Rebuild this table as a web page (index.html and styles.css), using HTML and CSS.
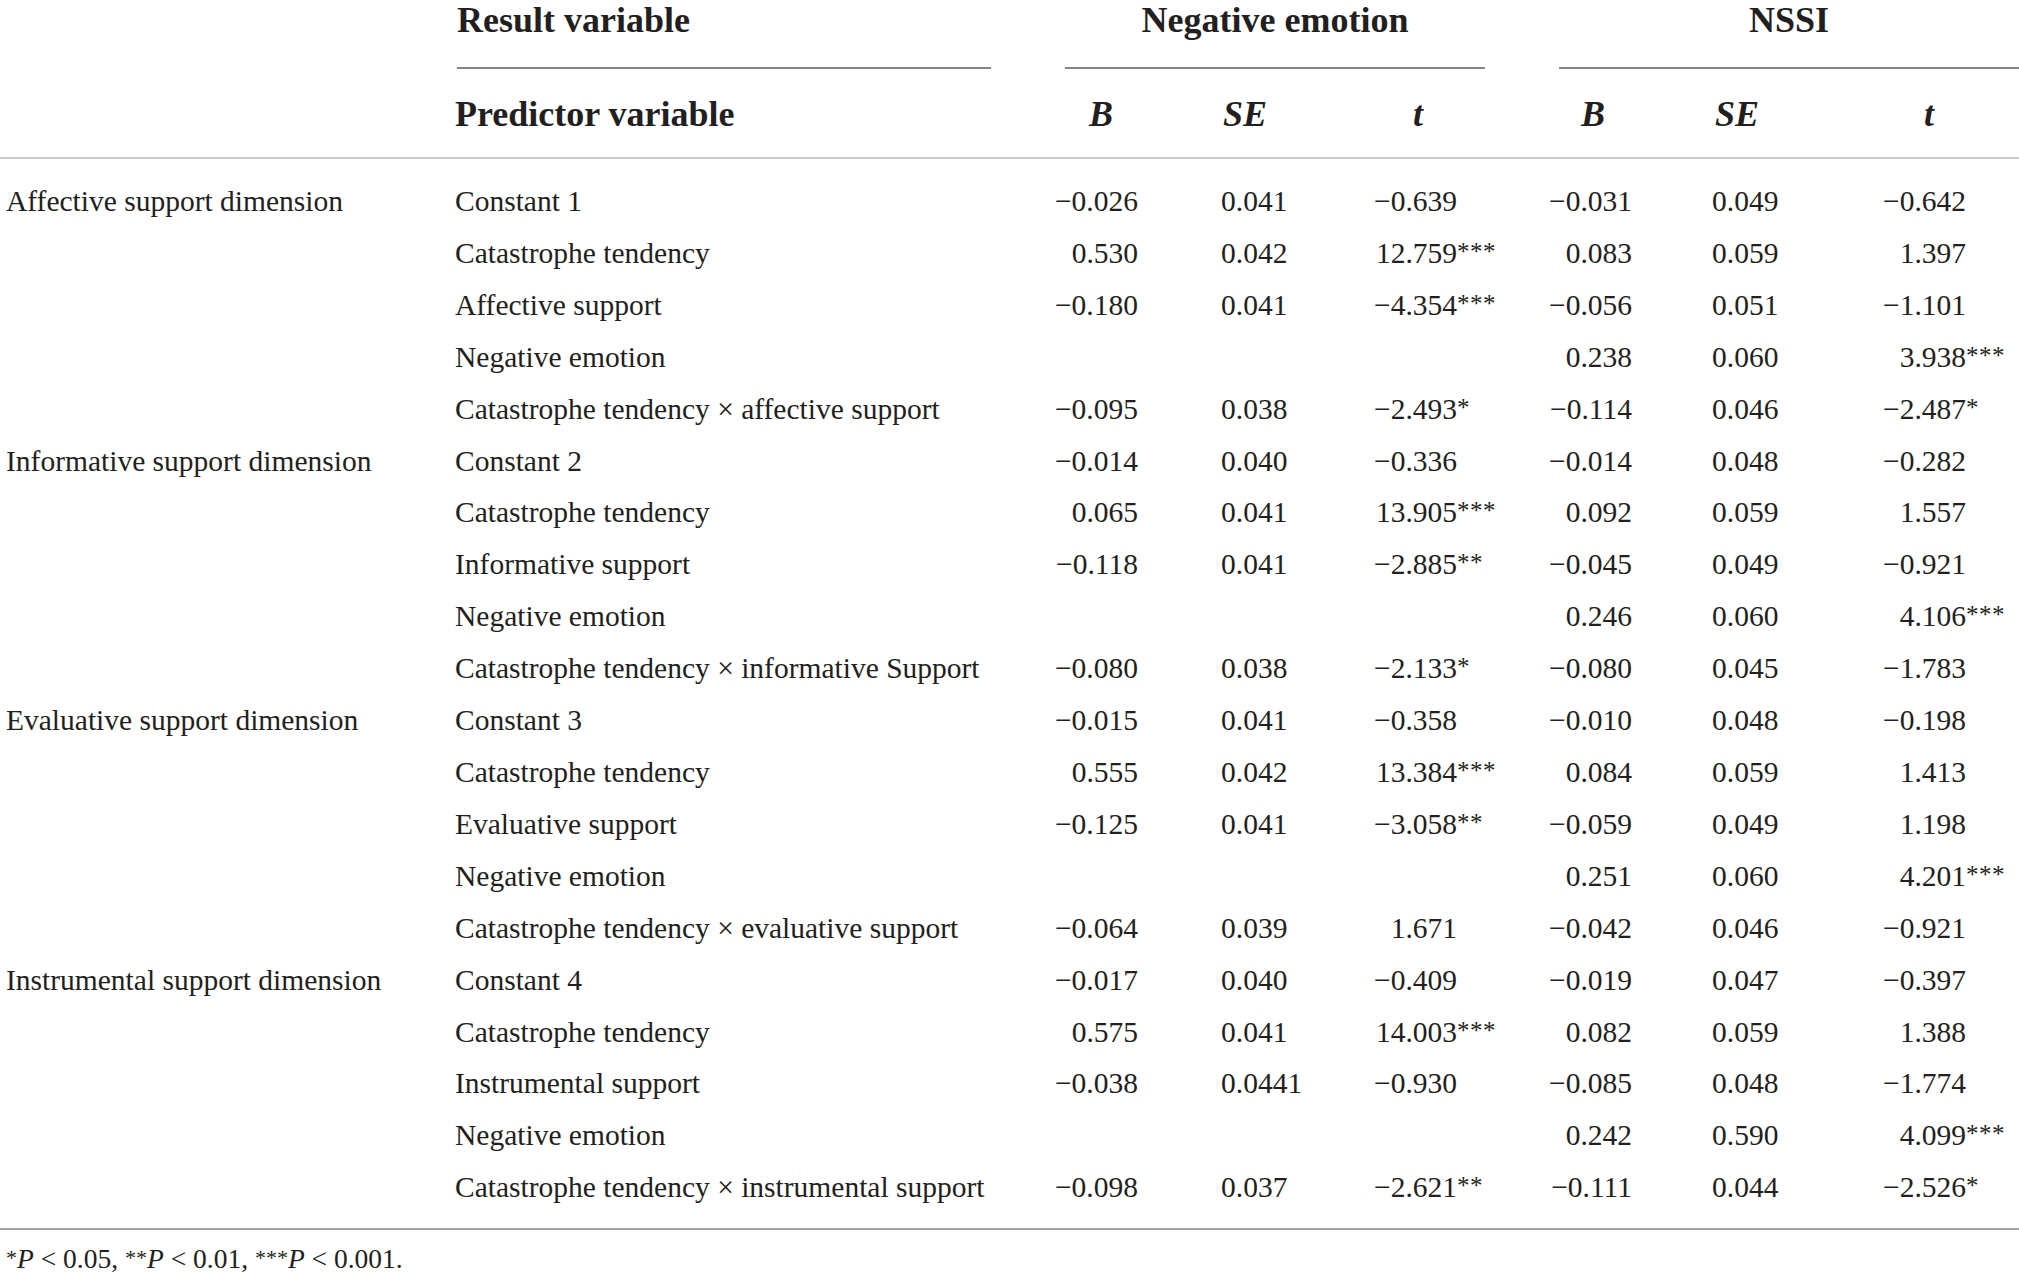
FILE: index.html
```html
<!DOCTYPE html>
<html lang="en">
<head>
<meta charset="utf-8">
<title>Moderated mediation table</title>
<link rel="stylesheet" href="styles.css">
</head>
<body>
<table class="res">
  <colgroup>
    <col class="w1"><col class="w2"><col class="w3"><col class="w4"><col class="w5"><col class="w6"><col class="w7"><col class="w8">
  </colgroup>
  <thead>
    <tr class="group">
      <th></th>
      <th><div class="gl gl-res">Result variable</div></th>
      <th colspan="3"><div class="gl gl-ne">Negative emotion</div></th>
      <th colspan="3"><div class="gl gl-nssi">NSSI</div></th>
    </tr>
    <tr class="sub">
      <th></th>
      <th class="pv">Predictor variable</th>
      <th class="h3"><i>B</i></th>
      <th class="h4"><i>SE</i></th>
      <th class="h5"><i>t</i></th>
      <th class="h6"><i>B</i></th>
      <th class="h7"><i>SE</i></th>
      <th class="h8"><i>t</i></th>
    </tr>
  </thead>
  <tbody>
    <tr><td class="c1">Affective support dimension</td><td class="c2">Constant 1</td><td class="c3">−0.026</td><td class="c4">0.041</td><td class="c5">−0.639</td><td class="c6">−0.031</td><td class="c7">0.049</td><td class="c8">−0.642</td></tr>
    <tr><td class="c1"></td><td class="c2">Catastrophe tendency</td><td class="c3">0.530</td><td class="c4">0.042</td><td class="c5">12.759<span class="sig">***</span></td><td class="c6">0.083</td><td class="c7">0.059</td><td class="c8">1.397</td></tr>
    <tr><td class="c1"></td><td class="c2">Affective support</td><td class="c3">−0.180</td><td class="c4">0.041</td><td class="c5">−4.354<span class="sig">***</span></td><td class="c6">−0.056</td><td class="c7">0.051</td><td class="c8">−1.101</td></tr>
    <tr><td class="c1"></td><td class="c2">Negative emotion</td><td class="c3"></td><td class="c4"></td><td class="c5"></td><td class="c6">0.238</td><td class="c7">0.060</td><td class="c8">3.938<span class="sig">***</span></td></tr>
    <tr><td class="c1"></td><td class="c2">Catastrophe tendency × affective support</td><td class="c3">−0.095</td><td class="c4">0.038</td><td class="c5">−2.493<span class="sig">*</span></td><td class="c6">−0.114</td><td class="c7">0.046</td><td class="c8">−2.487<span class="sig">*</span></td></tr>
    <tr><td class="c1">Informative support dimension</td><td class="c2">Constant 2</td><td class="c3">−0.014</td><td class="c4">0.040</td><td class="c5">−0.336</td><td class="c6">−0.014</td><td class="c7">0.048</td><td class="c8">−0.282</td></tr>
    <tr><td class="c1"></td><td class="c2">Catastrophe tendency</td><td class="c3">0.065</td><td class="c4">0.041</td><td class="c5">13.905<span class="sig">***</span></td><td class="c6">0.092</td><td class="c7">0.059</td><td class="c8">1.557</td></tr>
    <tr><td class="c1"></td><td class="c2">Informative support</td><td class="c3">−0.118</td><td class="c4">0.041</td><td class="c5">−2.885<span class="sig">**</span></td><td class="c6">−0.045</td><td class="c7">0.049</td><td class="c8">−0.921</td></tr>
    <tr><td class="c1"></td><td class="c2">Negative emotion</td><td class="c3"></td><td class="c4"></td><td class="c5"></td><td class="c6">0.246</td><td class="c7">0.060</td><td class="c8">4.106<span class="sig">***</span></td></tr>
    <tr><td class="c1"></td><td class="c2">Catastrophe tendency × informative Support</td><td class="c3">−0.080</td><td class="c4">0.038</td><td class="c5">−2.133<span class="sig">*</span></td><td class="c6">−0.080</td><td class="c7">0.045</td><td class="c8">−1.783</td></tr>
    <tr><td class="c1">Evaluative support dimension</td><td class="c2">Constant 3</td><td class="c3">−0.015</td><td class="c4">0.041</td><td class="c5">−0.358</td><td class="c6">−0.010</td><td class="c7">0.048</td><td class="c8">−0.198</td></tr>
    <tr><td class="c1"></td><td class="c2">Catastrophe tendency</td><td class="c3">0.555</td><td class="c4">0.042</td><td class="c5">13.384<span class="sig">***</span></td><td class="c6">0.084</td><td class="c7">0.059</td><td class="c8">1.413</td></tr>
    <tr><td class="c1"></td><td class="c2">Evaluative support</td><td class="c3">−0.125</td><td class="c4">0.041</td><td class="c5">−3.058<span class="sig">**</span></td><td class="c6">−0.059</td><td class="c7">0.049</td><td class="c8">1.198</td></tr>
    <tr><td class="c1"></td><td class="c2">Negative emotion</td><td class="c3"></td><td class="c4"></td><td class="c5"></td><td class="c6">0.251</td><td class="c7">0.060</td><td class="c8">4.201<span class="sig">***</span></td></tr>
    <tr><td class="c1"></td><td class="c2">Catastrophe tendency × evaluative support</td><td class="c3">−0.064</td><td class="c4">0.039</td><td class="c5">1.671</td><td class="c6">−0.042</td><td class="c7">0.046</td><td class="c8">−0.921</td></tr>
    <tr><td class="c1">Instrumental support dimension</td><td class="c2">Constant 4</td><td class="c3">−0.017</td><td class="c4">0.040</td><td class="c5">−0.409</td><td class="c6">−0.019</td><td class="c7">0.047</td><td class="c8">−0.397</td></tr>
    <tr><td class="c1"></td><td class="c2">Catastrophe tendency</td><td class="c3">0.575</td><td class="c4">0.041</td><td class="c5">14.003<span class="sig">***</span></td><td class="c6">0.082</td><td class="c7">0.059</td><td class="c8">1.388</td></tr>
    <tr><td class="c1"></td><td class="c2">Instrumental support</td><td class="c3">−0.038</td><td class="c4">0.0441</td><td class="c5">−0.930</td><td class="c6">−0.085</td><td class="c7">0.048</td><td class="c8">−1.774</td></tr>
    <tr><td class="c1"></td><td class="c2">Negative emotion</td><td class="c3"></td><td class="c4"></td><td class="c5"></td><td class="c6">0.242</td><td class="c7">0.590</td><td class="c8">4.099<span class="sig">***</span></td></tr>
    <tr><td class="c1"></td><td class="c2">Catastrophe tendency × instrumental support</td><td class="c3">−0.098</td><td class="c4">0.037</td><td class="c5">−2.621<span class="sig">**</span></td><td class="c6">−0.111</td><td class="c7">0.044</td><td class="c8">−2.526<span class="sig">*</span></td></tr>
  </tbody>
</table>
<p class="note"><span class="fs">*</span><i>P</i> &lt; 0.05, <span class="fs">**</span><i>P</i> &lt; 0.01, <span class="fs">***</span><i>P</i> &lt; 0.001.</p>
</body>
</html>
```
FILE: styles.css
```css
html, body {
  margin: 0;
  padding: 0;
  background: #ffffff;
}
body {
  font-family: "Liberation Serif", "Times New Roman", serif;
  color: #231f20;
  font-size: 29.5px;
}
.res {
  border-collapse: separate;
  border-spacing: 0;
  table-layout: fixed;
  width: 2019px;
}
.w1 { width: 455px; }
.w2 { width: 585px; }
.w3 { width: 140px; }
.w4 { width: 150px; }
.w5 { width: 190px; }
.w6 { width: 160px; }
.w7 { width: 180px; }
.w8 { width: 159px; }

th {
  font-weight: bold;
  font-size: 36px;
  line-height: 40px;
  padding: 0;
  white-space: nowrap;
}
.group th { vertical-align: top; }
.gl {
  padding-bottom: 27px;
  border-bottom: 2px solid #858585;
}
.gl-res { text-align: left; margin: 0 49px 0 2px; }
.gl-ne { text-align: center; margin: 0 35px 0 25px; }
.gl-nssi { text-align: center; margin: 0 0 0 39px; }

.sub th {
  padding-top: 25px;
  padding-bottom: 23px;
  border-bottom: 2px solid #c9c9c9;
  text-align: center;
}
.sub th i { font-style: italic; }
.sub .pv { text-align: left; }
.sub .h3 { padding-right: 18px; }
.sub .h4 { padding-right: 20px; }
.sub .h5 { padding-right: 14px; }
.sub .h6 { padding-right: 14px; }
.sub .h7 { padding-right: 66px; }
.sub .h8 { padding-right: 21px; }

td {
  padding: 0;
  line-height: 51.9px;
  white-space: nowrap;
  vertical-align: top;
}
tbody tr:first-child td { padding-top: 17px; }
tbody tr:last-child td {
  padding-bottom: 14px;
  border-bottom: 2px solid #a3a3a3;
}
.c1 { padding-left: 6px; }
.c3 { text-align: right; padding-right: 42px; }
.c4 { text-align: left; padding-left: 41px; }
.c5 { text-align: right; padding-right: 63px; }
.c6 { text-align: right; padding-right: 48px; }
.c7 { text-align: left; padding-left: 32px; }
.c8 { text-align: right; padding-right: 53px; }

.sig {
  display: inline-block;
  width: 0;
  font-size: 25px;
  text-align: left;
  line-height: 1;
  vertical-align: 3px;
  letter-spacing: 0.5px;
}
.note {
  margin: 9px 0 0 0;
  padding-left: 6px;
  line-height: 40px;
  font-size: 27.5px;
}
.note .fs {
  font-size: 22px;
  vertical-align: 3px;
  line-height: 1;
}
```
